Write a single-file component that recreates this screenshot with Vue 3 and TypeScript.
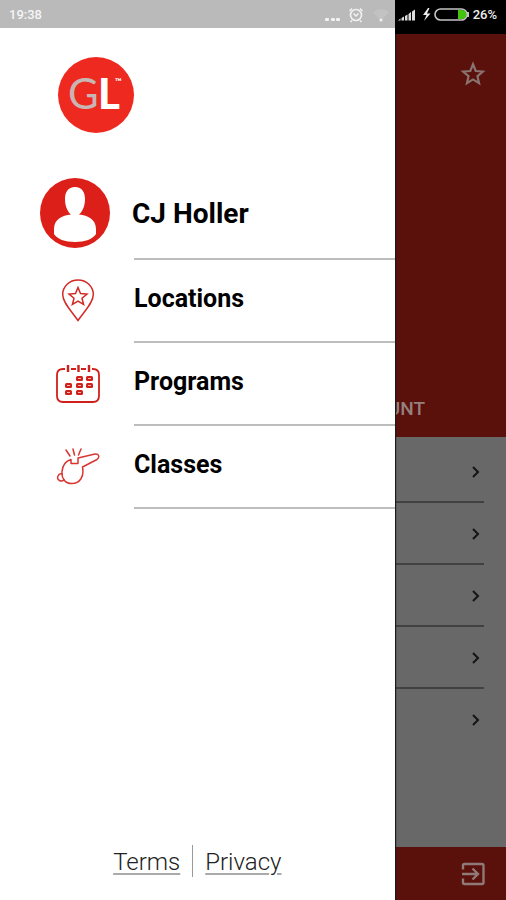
<script setup lang="ts">
interface MenuItem {
  label: string
  icon: 'pin' | 'calendar' | 'whistle'
}

const menu: MenuItem[] = [
  { label: 'Locations', icon: 'pin' },
  { label: 'Programs', icon: 'calendar' },
  { label: 'Classes', icon: 'whistle' },
]

const rows: number[] = [1, 2, 3, 4, 5]

const days: [number, number][] = [
  [21, 13], [31, 13],
  [10, 20], [21, 20], [31, 20],
  [10, 27], [21, 27],
]
</script>

<template>
  <div class="screen">
    <main class="page">
      <section class="hero">
        <button class="icon-button" type="button" aria-label="Favorite">
          <svg width="26" height="26" viewBox="0 0 24 24" fill="none" stroke="#8a7470" stroke-width="2">
            <path d="M12 3l2.5 6.2 6.6.5-5 4.300 1.500 6.500L12 17l-5.600 3.500L7.900 14l-5-4.300 6.600-.5z" />
          </svg>
        </button>
        <h1 class="hero-title">ACCOUNT</h1>
      </section>
      <ul class="options">
        <li v-for="row in rows" :key="row" class="option">
          <svg width="10" height="12" viewBox="0 0 10 12" fill="none" stroke="#151515" stroke-width="2">
            <path d="M2 1l5 5-5 5" />
          </svg>
        </li>
      </ul>
      <footer class="page-footer">
        <button class="icon-button" type="button" aria-label="Log out">
          <svg width="26" height="26" viewBox="0 0 26 26" fill="none" stroke="#8f7a77" stroke-width="2.400">
            <path d="M3 8.500V4.500Q3 3 4.500 3H22q1.500 0 1.500 1.500v17q0 1.500-1.500 1.500H4.500Q3 23 3 21.500v-4M2 13h15M12.500 7.500L18 13l-5.500 5.500" />
          </svg>
        </button>
      </footer>
    </main>

    <aside class="drawer">
      <svg class="logo" width="76" height="76" viewBox="0 0 76 76" role="img" aria-label="GL">
        <circle cx="38" cy="38" r="38" fill="#ee2a20" />
        <text x="10" y="52" class="logo-g">G</text>
        <text x="40" y="52" class="logo-l">L</text>
        <text x="57" y="28" class="logo-tm">™</text>
      </svg>

      <nav class="menu">
        <a class="item profile" href="#">
          <span class="item-icon">
            <svg width="70" height="70" viewBox="0 0 70 70">
              <circle cx="35" cy="35" r="35" fill="#dc1f18" />
              <path fill="#fff" d="M35 9c7 0 10 5 10 12 0 8-3 13-6 15.500 9 1 17 5 17 14.500v5c-3 5-11 8-21 8s-18-3-21-8v-5c0-9.500 8-13.500 17-14.500-3-2.500-6-7.500-6-15.500 0-7 3-12 10-12z" />
            </svg>
          </span>
          <span class="item-label">CJ Holler</span>
        </a>
        <a v-for="item in menu" :key="item.label" class="item" href="#">
          <span class="item-icon">
            <svg v-if="item.icon === 'pin'" width="44" height="44" viewBox="0 0 44 44" fill="none" stroke="#d32a25" stroke-width="1.500">
              <path d="M22 41.500C16 32.500 6.700 24 6.700 15.500a15.300 14.500 0 0 1 30.600 0C37.300 24 28 32.500 22 41.500z" />
              <path d="M22 8.500l2.500 6 6.500.5-5 4.200 1.600 6.300-5.600-3.400-5.600 3.400 1.600-6.300-5-4.200 6.500-.5z" />
            </svg>
            <svg v-else-if="item.icon === 'calendar'" width="44" height="44" viewBox="0 0 44 44" fill="none" stroke="#d0201c" stroke-width="1.800">
              <path d="M9 7H7Q1 7 1 13v21q0 6 6 6h30q6 0 6-6V13q0-6-6-6h-1M15 7h5M25 7h5" />
              <path d="M12 3v7M22.500 3v7M33 3v7" stroke-width="2.400" />
              <g fill="#d0201c" stroke="none">
                <rect v-for="[x, y] in days" :key="`${x}-${y}`" :x="x - 1" :y="y + 1" width="7" height="5" rx="1.500" />
              </g>
              <g fill="#f5b5b0" stroke="none">
                <rect v-for="[x, y] in days" :key="`${x}-${y}`" :x="x + 1" :y="y + 3" width="3" height="1" />
              </g>
            </svg>
            <svg v-else width="44" height="44" viewBox="0 0 44 44" fill="none" stroke="#d93632" stroke-width="1.500" stroke-linecap="round" stroke-linejoin="round">
              <path d="M15 14.500v4h7v-5.500l17-4c4-.5 5 3 2 5.500L26.500 22c2 10-3 16.500-10.500 16.500S5.500 33 6 26.500c.5-6 4-10.500 9-12z" />
              <path d="M6 29a3.500 3.500 0 1 0 2 5.500M10 5l4 6M17 4l1.500 6M25 4l-2.500 6" />
            </svg>
          </span>
          <span class="item-label">{{ item.label }}</span>
        </a>
      </nav>

      <footer class="legal">
        <a href="#">Terms</a>
        <span class="legal-divider"></span>
        <a href="#">Privacy</a>
      </footer>
    </aside>

    <header class="status">
      <div class="status-left">
        <span>19:38</span>
        <svg width="66" height="20" viewBox="0 0 66 20" fill="none" stroke="#f2f2f2">
          <g fill="#f2f2f2" stroke="none">
            <rect x="1" y="13" width="4" height="3" rx="1" />
            <rect x="7" y="13" width="4" height="3" rx="1" />
            <rect x="12" y="13" width="4" height="3" rx="1" />
          </g>
          <circle cx="32" cy="10" r="5.500" stroke-width="1.600" />
          <path d="M29.500 8.500L32 11l2.500-2.500M25.500 6L28 3.500M38.500 6L36 3.500M28 15.500l-1.500 1.500M36 15.500l1.500 1.500" stroke-width="1.500" />
          <path d="M49 7q8-6 16 0l-8 9z" fill="#c2c2c2" stroke="none" />
          <circle cx="57" cy="15" r="1.500" fill="#f2f2f2" stroke="none" />
        </svg>
      </div>
      <div class="status-right">
        <svg width="74" height="18" viewBox="0 0 74 18">
          <path fill="#ddd" d="M1 14.500l2.500-2v2zM4.500 12l2.500-1.500v4H4.500zM8 10l2.500-1.500v6H8zM11.500 8L14 6v8.500h-2.500zM15 5.500l3-2v11h-3z" />
          <path fill="#eee" d="M31 2l-5 7h3.500L27 15l6.500-7.500H30L32.500 2z" />
          <rect x="38" y="3" width="32" height="11" rx="5.500" fill="#000" stroke="#c4c4c4" stroke-width="1.600" />
          <path d="M61 4h4a4.500 4.500 0 0 1 0 9h-4z" fill="#43c50e" />
          <path d="M71 6v5" stroke="#c4c4c4" stroke-width="2" />
        </svg>
        <span>26%</span>
      </div>
    </header>
  </div>
</template>

<style>
body {
  margin: 0;
}
</style>

<style scoped>
.screen {
  position: relative;
  min-height: 100vh;
  overflow: hidden;
  background: #686868;
  font-family: Roboto, 'Liberation Sans', sans-serif;
}

.page {
  display: flex;
  flex-direction: column;
  min-height: 100vh;
}

.hero {
  display: flex;
  flex-direction: column;
  justify-content: space-between;
  align-items: flex-end;
  box-sizing: border-box;
  height: 437px;
  padding: 61px 20px 16px;
  background: #5a100b;
}

.icon-button {
  display: block;
  padding: 0;
  border: 0;
  background: none;
}

.icon-button svg {
  display: block;
}

.hero-title {
  margin: 0 61px 0 0;
  color: #96807d;
  font-size: 19px;
  font-weight: 500;
  line-height: 24px;
}

.options {
  flex: 1;
  margin: 0;
  padding: 4px 22px 0 0;
  list-style: none;
}

.option {
  display: flex;
  align-items: center;
  justify-content: flex-end;
  box-sizing: border-box;
  height: 62px;
  padding: 2px 3px 0 0;
  border-bottom: 2px solid #414141;
}

.option:last-child {
  border-bottom-color: transparent;
}

.page-footer {
  display: flex;
  align-items: center;
  justify-content: flex-end;
  height: 53px;
  padding-right: 20px;
  background: #5a100b;
}

.drawer {
  position: absolute;
  top: 0;
  bottom: 0;
  left: 0;
  display: flex;
  flex-direction: column;
  box-sizing: border-box;
  width: 78%;
  padding-top: 57px;
  background: #fff;
  box-shadow: 1px 0 1px #1a1a1a;
}

.logo {
  margin-left: 58px;
}

.logo text {
  font-family: Lato, sans-serif;
}

.logo .logo-g {
  fill: #c9b5b3;
  font-size: 42px;
  font-weight: 400;
}

.logo .logo-l {
  fill: #fff;
  font-size: 42px;
  font-weight: 900;
}

.logo .logo-tm {
  fill: #fff;
  font-size: 9px;
  font-weight: 700;
}

.menu {
  display: flex;
  flex-direction: column;
  padding-top: 34px;
}

.item {
  display: flex;
  height: 83px;
  color: #000;
  font-size: 25px;
  font-weight: 700;
  text-decoration: none;
}

.item-icon {
  display: flex;
  flex: none;
  justify-content: center;
  align-items: center;
  box-sizing: border-box;
  width: 134px;
  padding: 0 0 2px 22px;
}

.item-label {
  display: flex;
  align-items: center;
  flex: 1;
  box-sizing: border-box;
  padding-bottom: 4px;
  border-bottom: 2px solid #bdbdbd;
}

.profile {
  height: 93px;
  font-size: 28px;
}

.profile .item-icon {
  padding: 0 0 2px 16px;
}

.profile .item-label {
  padding: 2px 0 0;
  text-indent: -2px;
}

.legal {
  display: flex;
  justify-content: center;
  align-items: center;
  gap: 12px;
  margin-top: auto;
  padding-bottom: 22px;
}

.legal a {
  padding-top: 2px;
  color: #222;
  font-size: 24px;
  font-weight: 300;
  line-height: 32px;
  text-decoration: underline #aaa 2px;
  text-underline-offset: 3px;
}

.legal-divider {
  width: 1px;
  height: 32px;
  background: #999;
}

.status {
  position: absolute;
  top: 0;
  right: 0;
  left: 0;
  display: flex;
  align-items: flex-start;
  font-size: 13px;
  font-weight: 500;
  line-height: 28px;
}

.status-left {
  display: flex;
  align-items: center;
  justify-content: space-between;
  box-sizing: border-box;
  width: 78%;
  height: 28px;
  padding: 2px 5px 0 9px;
  background: #bababa;
  color: #f5f5f5;
}

.status-right {
  display: flex;
  align-items: center;
  flex: 1;
  gap: 2px;
  box-sizing: border-box;
  height: 34px;
  padding: 0 0 4px 2px;
  background: #000;
  color: #eee;
}
</style>
